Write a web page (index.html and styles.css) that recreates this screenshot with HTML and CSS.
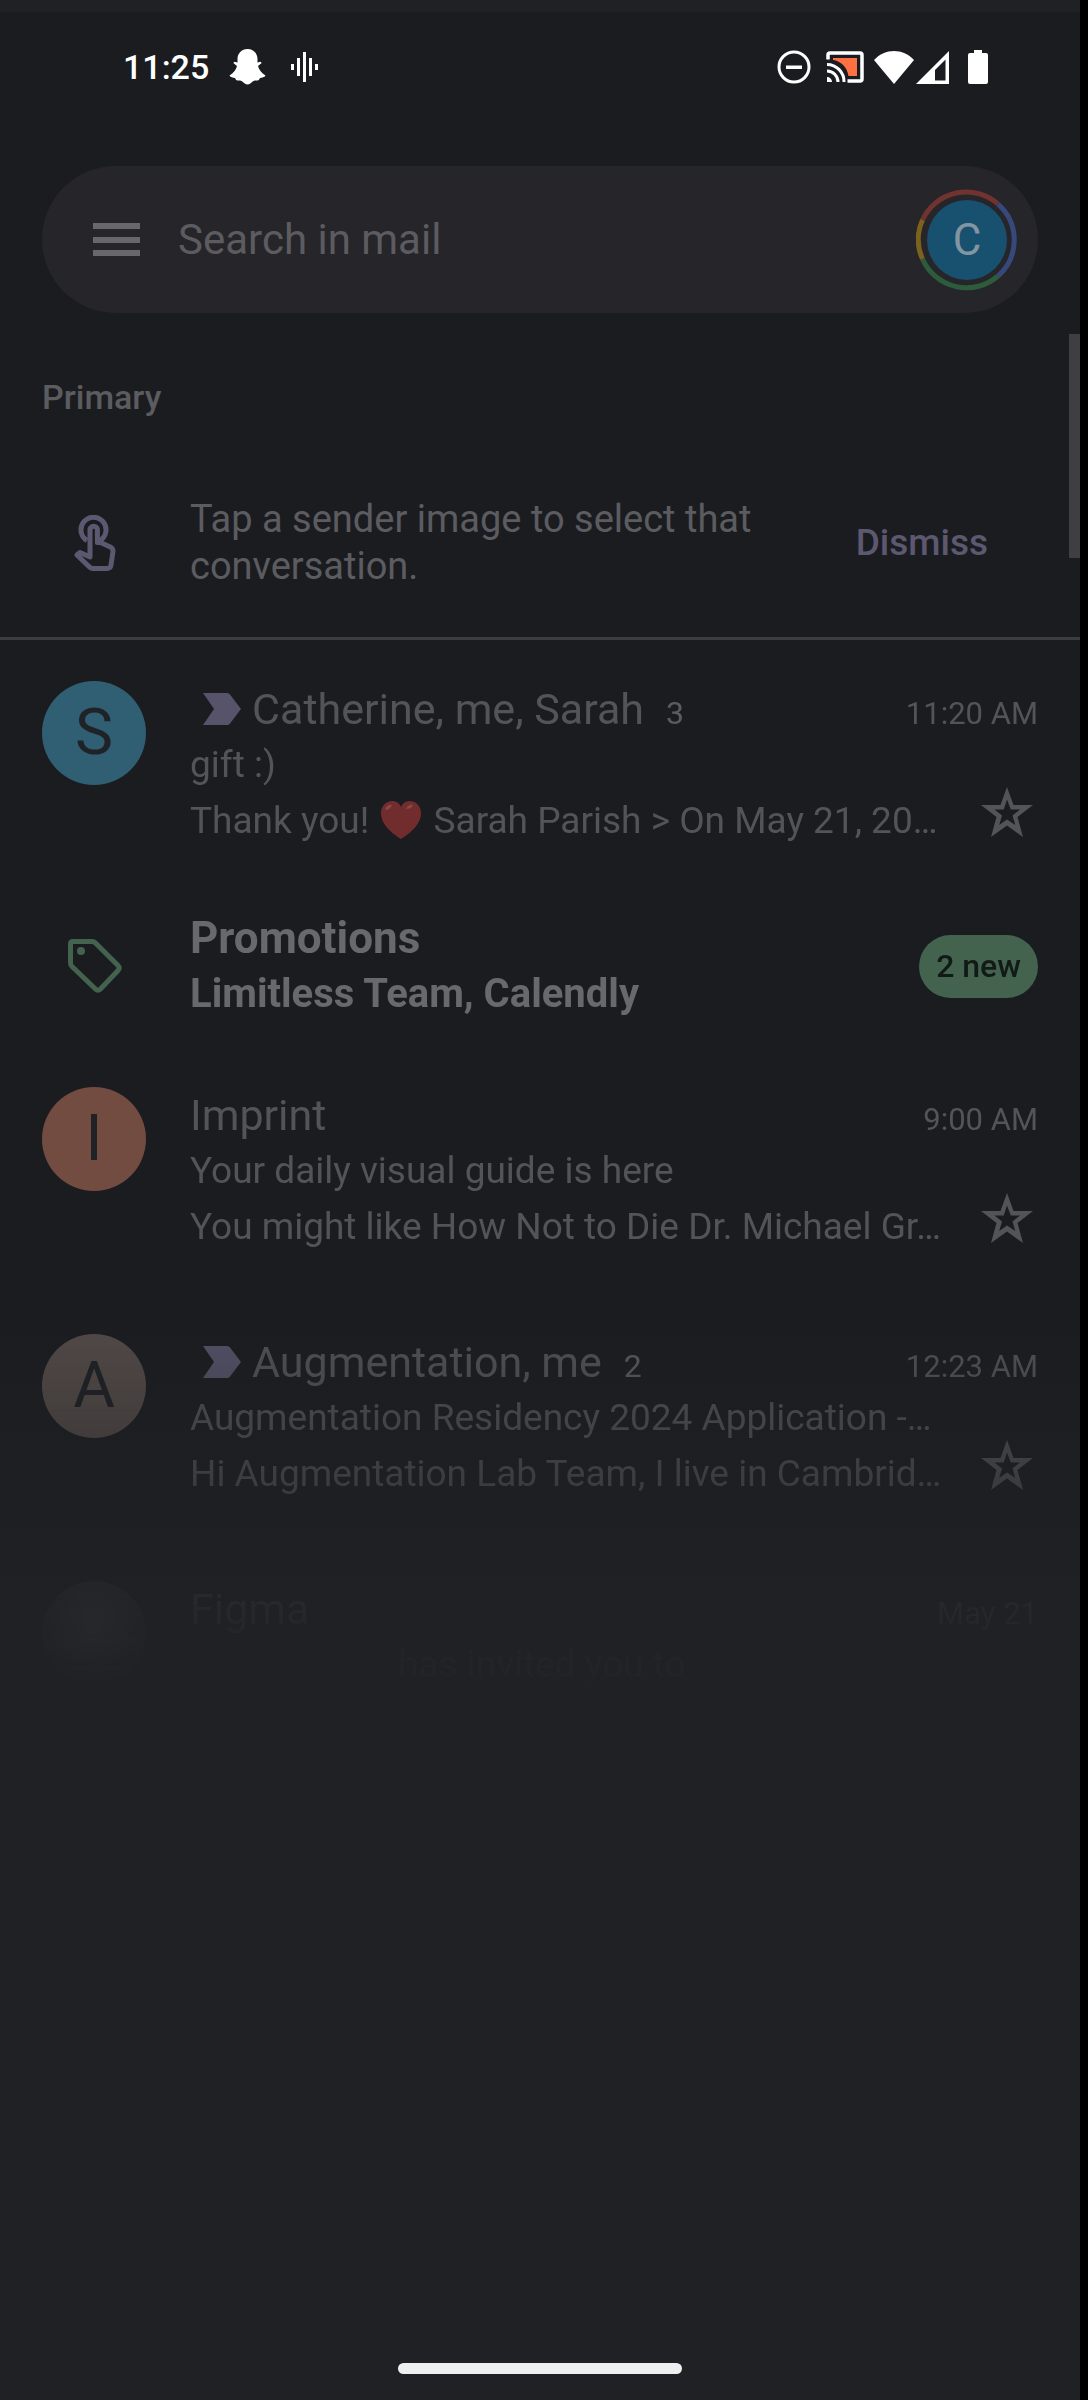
FILE: index.html
```html
<!DOCTYPE html>
<html lang="en">
<head>
<meta charset="utf-8">
<meta name="viewport" content="width=device-width, initial-scale=1">
<title>Mail</title>
<link rel="stylesheet" href="styles.css">
</head>
<body>
<svg width="0" height="0" hidden>
  <symbol id="star" viewBox="0 0 52 50"><path fill-rule="evenodd" d="M26 0l6.500 18H52L36.500 30 42 50 26 38.500 10 50l5.500-20L0 18h19.500zM26 12.500l-3.300 10h-9.200l7.500 6-2.800 9.500L26 32.500l8.300 5.500-2.800-9.500 7.500-6h-9.200z"/></symbol>
  <symbol id="important" viewBox="0 0 38 32"><path d="M0 0h24q2 0 3 1.500L38 16 27 30.500q-1 1.500-3 1.500H0l11-16z"/></symbol>
</svg>
<div class="phone">
  <header class="status">
    <div class="status-group status-left">
      <time class="clock">11:25</time>
      <svg class="snap" viewBox="0 0 36 36" aria-hidden="true"><path d="M18 0c6 0 10 4.500 10 10v3.500l3-.8 1.200 1.200-3.700 3c1 4 3.500 7 7.500 9.600-1 2-3.500 2-5.500 2.500-.8 1.500-1 2.500-2.500 2.500-2 0-3-.5-4.500.8C21.500 34 20 35.500 18 35.500s-3.500-1.500-5.500-3.200C11 31 10 31.500 8 31.500c-1.500 0-1.700-1-2.500-2.500C3.500 28.500 1 28.500 0 26.500c4-2.600 6.500-5.600 7.500-9.600l-3.700-3L5 12.700l3 .8V10C8 4.500 12 0 18 0z"/></svg>
      <svg class="wave" viewBox="0 0 28 30" aria-hidden="true"><path d="M0 12h3v6H0zM6 6h3v18H6zM12 0h3v30h-3zM18 6h3v18h-3zM24 12h3v6h-3z"/></svg>
    </div>
    <div class="status-group status-right">
      <svg class="dnd" viewBox="0 0 34 34" aria-hidden="true"><circle cx="17" cy="17" r="15" fill="none" stroke="#fff" stroke-width="3"/><path d="M9 15.500h16v3.500H9z"/></svg>
      <svg class="cast" viewBox="0 0 38 32" aria-hidden="true"><path fill="#ff7043" d="M7 7h24v18H22.500C21 16 15 10 7 9z"/><path fill="none" stroke="#fff" stroke-width="3.500" d="M2 8.500V4q0-2 2-2h30q2 0 2 2v24q0 2-2 2H21.500"/><path fill="none" stroke="#fff" stroke-width="3" d="M1 13.500A17 17 0 0 1 18 31M1 20a11 11 0 0 1 11 11"/><path d="M1 26a5 5 0 0 1 5 5H1z"/></svg>
      <svg class="wifi" viewBox="0 0 40 33" aria-hidden="true"><path d="M0 9C11-3 29-3 40 9L20 33z"/></svg>
      <svg class="signal" viewBox="0 0 33 33" aria-hidden="true"><path fill-rule="evenodd" d="M33 0v33H0zM29.500 8.500L19 19v10.500h10.500z"/></svg>
      <svg class="battery" viewBox="0 0 20 34" aria-hidden="true"><path d="M6 0h8v3h4q2 0 2 2v27q0 2-2 2H2q-2 0-2-2V5q0-2 2-2h4z"/></svg>
    </div>
  </header>

  <form class="search" role="search">
    <button class="icon-button menu" type="button" aria-label="Open navigation"><svg viewBox="0 0 47 34"><path d="M0 0h47v6H0zM0 14h47v6H0zM0 27h47v6H0z"/></svg></button>
    <input class="search-input" type="search" aria-label="Search in mail" placeholder="Search in mail">
    <button class="icon-button account" type="button" aria-label="Account C">
      <svg class="ring" viewBox="0 0 102 102" aria-hidden="true">
        <path stroke="#71332f" d="M6.500 31A48 48 0 0 1 82 15"/>
        <path stroke="#36497a" d="M82 15A48 48 0 0 1 82 87"/>
        <path stroke="#2c5c3c" d="M82 87A48 48 0 0 1 6.500 70"/>
        <path stroke="#7c631d" d="M6.500 70A48 48 0 0 1 6.500 31"/>
      </svg>
      <span class="account-letter">C</span>
    </button>
  </form>

  <main class="inbox">
    <h1 class="section-title">Primary</h1>
    <section class="tip">
      <svg class="tip-icon" viewBox="0 0 42 56" aria-hidden="true"><path d="M13 25.500A12.500 12.500 0 1 1 26 25.500"/><path d="M16 42V15a3.700 3.700 0 0 1 7.400 0v12.500h3l10 4.500q3 1.500 2.500 5L37 50q-.5 3.500-4 3.500H19q-2 0-3.500-1.500L3 40l3-2.500z"/></svg>
      <p class="tip-text">Tap a sender image to select that conversation.</p>
      <button class="dismiss" type="button">Dismiss</button>
    </section>

    <ul class="list">
      <li class="row">
        <span class="avatar avatar-blue">S</span>
        <div class="mail">
          <div class="line head"><svg class="important" aria-hidden="true"><use href="#important"/></svg><span class="name">Catherine, me, Sarah</span><span class="count">3</span><time class="time">11:20 AM</time></div>
          <p class="line">gift :)</p>
          <p class="line">Thank you! <svg class="heart" viewBox="0 0 40 38" role="img" aria-label="red heart"><path fill="#712d2d" d="M20 38C12 33 0 24 0 12 0 5 5 0 11 0c4 0 7.500 2 9 6 1.500-4 5-6 9-6 6 0 11 5 11 12 0 12-12 21-20 26z"/><path fill="#8a4845" d="M4 9c1-4 4-6 7-5-1 3-4 5-7 5zM25 8c1-3 4-5 7-4-1 3-4 4-7 4z"/></svg> Sarah Parish &gt; On May 21, 20…</p>
          <button class="icon-button star" type="button" aria-label="Star"><svg><use href="#star"/></svg></button>
        </div>
      </li>
      <li class="row row-category">
        <svg class="tag" viewBox="0 0 54 54" aria-hidden="true"><path fill="none" stroke="#43634f" stroke-width="5" stroke-linejoin="round" d="M5 2.500h19q2 0 3.500 1.500L50 26.500q2.500 2.500 0 5L32.500 50q-2.500 2.500-5 0L4 27.500Q2.500 26 2.500 24V5q0-2.500 2.500-2.500z"/><circle cx="13" cy="12" r="4" fill="#43634f"/></svg>
        <div class="category">
          <p class="line category-name">Promotions</p>
          <p class="line category-from">Limitless Team, Calendly</p>
        </div>
        <span class="badge">2 new</span>
      </li>
      <li class="row">
        <span class="avatar avatar-orange">I</span>
        <div class="mail">
          <div class="line head"><span class="name">Imprint</span><time class="time">9:00 AM</time></div>
          <p class="line">Your daily visual guide is here</p>
          <p class="line">You might like How Not to Die Dr. Michael Gr…</p>
          <button class="icon-button star" type="button" aria-label="Star"><svg><use href="#star"/></svg></button>
        </div>
      </li>
      <li class="row">
        <span class="avatar avatar-grey">A</span>
        <div class="mail">
          <div class="line head"><svg class="important" aria-hidden="true"><use href="#important"/></svg><span class="name">Augmentation, me</span><span class="count">2</span><time class="time">12:23 AM</time></div>
          <p class="line">Augmentation Residency 2024 Application -…</p>
          <p class="line">Hi Augmentation Lab Team, I live in Cambrid…</p>
          <button class="icon-button star" type="button" aria-label="Star"><svg><use href="#star"/></svg></button>
        </div>
      </li>
      <li class="row">
        <span class="avatar avatar-dark"></span>
        <div class="mail">
          <div class="line head"><span class="name">Figma</span><time class="time">May 21</time></div>
          <p class="line invite">has invited you to</p>
        </div>
      </li>
    </ul>
    <div class="scrollbar"></div>
  </main>

  <footer class="gesture"><div class="handle"></div></footer>
</div>
</body>
</html>
```

FILE: styles.css
```css
* { box-sizing: border-box; }

body {
  margin: 0;
  background: #000;
  font-family: Roboto, "Liberation Sans", sans-serif;
  color: #535458;
}

p, h1, ul { margin: 0; padding: 0; }
ul { list-style: none; }
svg { display: block; fill: currentColor; flex: none; }

button {
  border: 0;
  padding: 0;
  background: none;
  font: inherit;
  color: inherit;
}

.phone {
  display: flex;
  flex-direction: column;
  min-height: 100vh;
  margin-right: 8px;
  border-top: 12px solid #202124;
  background: linear-gradient(#1b1c20 0, #1b1c20 1280px, #202124 1600px);
}

/* Status bar */
.status {
  display: flex;
  justify-content: space-between;
  height: 112px;
  padding: 0 92px 0 123px;
  color: #fff;
}
.status-group { display: flex; align-items: center; height: 110px; }
.clock { font-size: 34px; font-weight: 500; line-height: 42px; }
.snap { width: 37px; height: 36px; margin: 0 25px 0 20px; }
.wave { width: 28px; height: 30px; }
.dnd { width: 34px; height: 34px; margin-right: 15px; }
.cast { width: 38px; height: 32px; margin-right: 10px; }
.wifi { width: 40px; height: 33px; margin-right: 2px; }
.signal { width: 33px; height: 33px; margin-right: 19px; }
.battery { width: 20px; height: 34px; }

/* Search */
.search {
  display: flex;
  align-items: center;
  height: 147px;
  margin: 42px 42px 0;
  padding: 0 20px 0 51px;
  border-radius: 74px;
  background: #26252a;
}
.menu { color: #68676b; }
.menu svg { width: 47px; height: 34px; }
.search-input {
  flex: 1;
  min-width: 0;
  margin: 0 20px 0 38px;
  padding: 0;
  border: 0;
  outline: 0;
  background: none;
  font: 400 42px/56px Roboto, "Liberation Sans", sans-serif;
  color: #5c5c60;
}
.search-input::placeholder { color: #5c5c60; opacity: 1; }
.account { display: grid; place-items: center; }
.account > * { grid-area: 1 / 1; }
.ring { width: 102px; height: 102px; fill: none; stroke-width: 5; }
.account-letter {
  width: 80px;
  height: 80px;
  border-radius: 50%;
  background: #18506f;
  color: #8296a1;
  font-size: 44px;
  line-height: 80px;
}

/* Inbox */
.inbox { position: relative; flex: 1; }
.section-title {
  padding: 64px 42px 0;
  font-size: 34px;
  font-weight: 500;
  line-height: 40px;
  color: #5c5c60;
}
.tip {
  display: flex;
  align-items: center;
  padding: 79px 92px 47px 74px;
  border-bottom: 3px solid #3c3d41;
}
.tip-icon {
  width: 42px;
  height: 56px;
  fill: none;
  stroke: #5c5870;
  stroke-width: 5;
  stroke-linejoin: round;
}
.tip-text {
  flex: 1;
  max-width: 580px;
  margin-left: 74px;
  font-size: 38px;
  line-height: 47px;
  color: #5c5c60;
}
.dismiss {
  margin-left: auto;
  font-size: 37px;
  font-weight: 500;
  line-height: 48px;
  color: #5c5870;
}

.list {
  -webkit-mask-image: linear-gradient(#000 660px, rgba(0, 0, 0, .55) 845px, rgba(0, 0, 0, .12) 970px, rgba(0, 0, 0, .05) 1035px, transparent 1060px);
  mask-image: linear-gradient(#000 660px, rgba(0, 0, 0, .55) 845px, rgba(0, 0, 0, .12) 970px, rgba(0, 0, 0, .05) 1035px, transparent 1060px);
}
.row {
  display: flex;
  gap: 44px;
  padding: 41px 42px 38px;
}
.avatar {
  flex: none;
  width: 104px;
  height: 104px;
  border-radius: 50%;
  font-size: 64px;
  line-height: 104px;
  text-align: center;
  color: #1f2226;
}
.avatar-blue { background: #305e72; }
.avatar-orange { background: #724b41; }
.avatar-grey { background: #544c49; }
.avatar-dark { background: radial-gradient(#66676a, #3a3b3d 60%, #2c2d30); }

.mail { position: relative; flex: 1; min-width: 0; }
.line {
  height: 56px;
  font-size: 37px;
  line-height: 56px;
  white-space: nowrap;
}
.head { display: flex; align-items: baseline; }
.important {
  align-self: center;
  width: 38px;
  height: 32px;
  margin: 0 11px 0 13px;
  color: #56536a;
}
.name { font-size: 43px; }
.count { margin-left: 22px; font-size: 32px; color: #5c5c60; }
.time { margin-left: auto; font-size: 31px; }
.heart { display: inline-block; width: 40px; height: 38px; margin: 0 3px; vertical-align: -6px; }
.star { position: absolute; right: 5px; bottom: 12px; }
.star svg { width: 52px; height: 50px; }
.invite { padding-left: 208px; }

.row-category { align-items: center; padding: 23px 42px 24px 68px; }
.tag { width: 54px; height: 54px; margin-right: 24px; }
.category { flex: 1; color: #68696c; font-weight: 700; }
.category-name { font-size: 44px; }
.category-from { font-size: 40px; }
.badge {
  padding: 0 17px;
  border-radius: 32px;
  background: #43634f;
  color: #111a16;
  font-size: 32px;
  font-weight: 500;
  line-height: 63px;
}

.scrollbar {
  position: absolute;
  top: 21px;
  right: 0;
  width: 11px;
  height: 224px;
  background: #3f3f41;
}

.gesture { display: flex; justify-content: center; padding-bottom: 26px; }
.handle { width: 284px; height: 11px; border-radius: 6px; background: #eeefef; }
```
